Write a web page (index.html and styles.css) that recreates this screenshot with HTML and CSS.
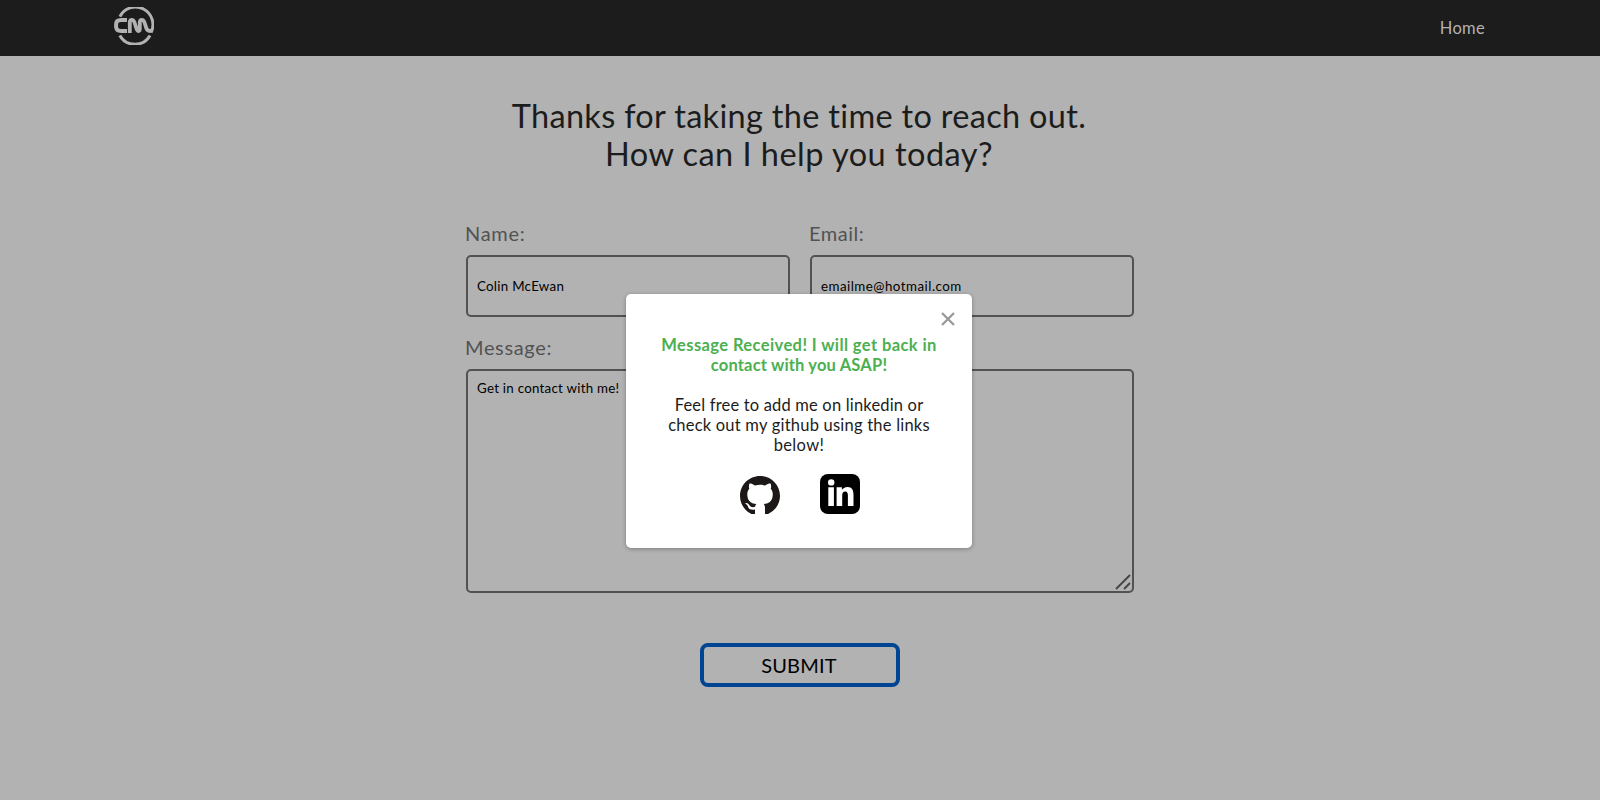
FILE: index.html
```html
<!DOCTYPE html>
<html lang="en">
<head>
<meta charset="utf-8">
<title>Contact</title>
<link rel="stylesheet" href="styles.css">
</head>
<body>
<header class="nav">
  <a class="logo" href="#" aria-label="Home page">
    <svg width="40" height="38" viewBox="0 0 40 38" fill="none" stroke="#b2b2b2">
      <path d="M5.9 9.6A17.3 17.3 0 1 1 37 25.5M36 28.4A17.3 17.3 0 0 1 5.8 28.4" stroke-width="3"/>
      <path d="M13 13.1H7.2Q2.1 13.1 2.1 17.4V19.8Q2.1 24 7.2 24H13" stroke-width="4"/>
      <path d="M15.8 26V15.5Q15.8 12.8 17.8 12.8Q19.6 12.8 20.5 15.5L22.6 21.8Q23.4 24 24.6 24Q25.8 24 25.8 21.8V15.5Q25.8 12.8 27.8 12.8Q29.6 12.8 30.5 15.5L32.5 21.6Q33.3 24 37 24" stroke-width="3.8" stroke-linejoin="round"/>
    </svg>
  </a>
  <a class="nav-link" href="#">Home</a>
</header>
<main class="contact">
  <h1 class="title"><span class="line title-a">Thanks for taking the time to reach out.</span><span class="line title-b">How can I help you today?</span></h1>
  <form class="form">
    <div class="row">
      <div class="field">
        <label class="label label-name">Name:</label>
        <div class="input"><span class="name-value">Colin McEwan</span></div>
      </div>
      <div class="field">
        <label class="label label-email">Email:</label>
        <div class="input"><span class="email-value">emailme@hotmail.com</span></div>
      </div>
    </div>
    <div class="field">
      <label class="label label-message">Message:</label>
      <div class="input textarea"><span class="message-value">Get in contact with me!</span>
        <svg class="grip" width="16" height="16" viewBox="0 0 16 16" stroke="#444" stroke-width="1.8"><path d="M1 15 15 1M9 15l6-6"/></svg>
      </div>
    </div>
    <button class="submit" type="button">SUBMIT</button>
  </form>
</main>
<section class="modal" role="dialog">
  <svg class="close" width="14" height="14" viewBox="0 0 14 14" stroke="#999" stroke-width="2.3"><path d="M1 1l12 12M13 1 1 13"/></svg>
  <p class="success"><span class="line success-a">Message Received! I will get back in</span><span class="line success-b">contact with you ASAP!</span></p>
  <p class="note"><span class="line note-a">Feel free to add me on linkedin or</span><span class="line note-b">check out my github using the links</span><span class="line note-c">below!</span></p>
  <div class="links">
    <a class="github" href="#" aria-label="GitHub"><svg width="40" height="38" viewBox="0 0 16 15.2" fill="#1b1817"><path d="M8 0C3.58 0 0 3.58 0 8c0 3.3 2 6.1 4.9 7.35.5.2 1.1.15 1.1-.4V13.4c-2.01.37-2.53-.49-2.69-.94-.09-.23-.48-.94-.82-1.13-.28-.15-.68-.52-.01-.53.63-.01 1.08.58 1.23.82.72 1.21 1.87.87 2.33.66.07-.52.28-.87.51-1.07-1.78-.2-3.64-.89-3.64-3.95 0-.87.31-1.59.82-2.15-.08-.2-.36-1.02.08-2.12 0 0 .67-.21 2.2.82.64-.18 1.32-.27 2-.27s1.36.09 2 .27c1.53-1.04 2.2-.82 2.2-.82.44 1.1.16 1.92.08 2.12.51.56.82 1.27.82 2.15 0 3.07-1.87 3.75-3.65 3.95.29.25.54.73.54 1.48v2.4c0 .21.15.46.55.38A8.01 8.01 0 0 0 16 8c0-4.42-3.58-8-8-8z"/></svg></a>
    <a class="linkedin" href="#" aria-label="LinkedIn"><svg width="40" height="40" viewBox="0 0 40 40"><rect width="40" height="40" rx="8"/><g fill="#fff"><circle cx="11.2" cy="8.4" r="3.2"/><path d="M8.3 13.2h5.6v18.8H8.3zM16.6 13.2h5.3V16c1-1.8 2.9-3.1 5.6-3.1 4.6 0 6 3.2 6 7.8V32h-5.6V21.5c0-2.4-.5-4.1-2.7-4.1-2.4 0-3 1.8-3 4.1V32h-5.6z"/></g></svg></a>
  </div>
</section>
</body>
</html>
```
FILE: styles.css
```css
* { box-sizing: border-box; }
body { margin: 0; min-height: 800px; background: #b2b2b2; color: #1c1c1c; font-family: Lato, sans-serif; }
a { color: inherit; text-decoration: none; }
.nav { height: 56px; padding: 0 115px 0 114px; background: #1c1c1c; color: #b2b2b2; display: flex; justify-content: space-between; align-items: center; }
.logo { height: 42px; }
.logo svg, .links svg { display: block; }
.nav-link { font-size: 16.5px; letter-spacing: .3px; }
.contact { width: 668px; margin: 0 auto; padding-top: 41px; }
.line { display: block; white-space: nowrap; }
.title { margin: 0 1px 0 -1px; font-size: 32.5px; font-weight: 400; line-height: 38px; text-align: center; }
.title-a { letter-spacing: .31px; }
.title-b { letter-spacing: .47px; }
.form { padding-top: 48px; }
.row { display: flex; gap: 20px; }
.field { flex: 1; }
.label { display: block; height: 34px; margin-left: -1px; line-height: 24px; font-size: 20px; color: #525252; }
.label-name { letter-spacing: .7px; }
.label-email { letter-spacing: .5px; }
.label-message { letter-spacing: .65px; }
.input { height: 62px; border: 2px solid #525252; border-radius: 5px; padding: 0 9px; display: flex; align-items: center; font-size: 13.33px; color: #000; }
.name-value { letter-spacing: .27px; }
.email-value { letter-spacing: .48px; }
.message-value { letter-spacing: .25px; }
.row + .field { margin-top: 14px; }
.row + .field .label { height: 38px; padding-top: 4px; }
.textarea { position: relative; height: 224px; align-items: flex-start; padding-top: 9px; }
.grip { position: absolute; right: 1px; bottom: 1px; }
.submit { display: block; width: 200px; height: 44px; margin: 50px auto 0; padding: 0 2px 0 0; border: 4px solid #004494; border-radius: 8px; background: transparent; font: 20px Lato, sans-serif; letter-spacing: .2px; color: #000; }
.modal { position: absolute; left: 626px; top: 294px; width: 346px; height: 254px; padding: 41px 24px 0; border-radius: 5px; background: #fff; box-shadow: 0 1px 4px rgba(0,0,0,.3); font-size: 16.5px; line-height: 20px; text-align: center; }
.close { position: absolute; right: 17px; top: 18px; }
.success { margin: 0 0 20px; color: #4caf50; font-weight: 700; }
.success-a { letter-spacing: .4px; }
.success-b { letter-spacing: .18px; }
.note { margin: 0; }
.note-a { letter-spacing: .18px; }
.note-b { letter-spacing: .22px; }
.note-c { letter-spacing: .36px; }
.links { display: flex; justify-content: center; gap: 40px; padding: 19px 0 0 2px; }
.github { padding-top: 2px; }
```
